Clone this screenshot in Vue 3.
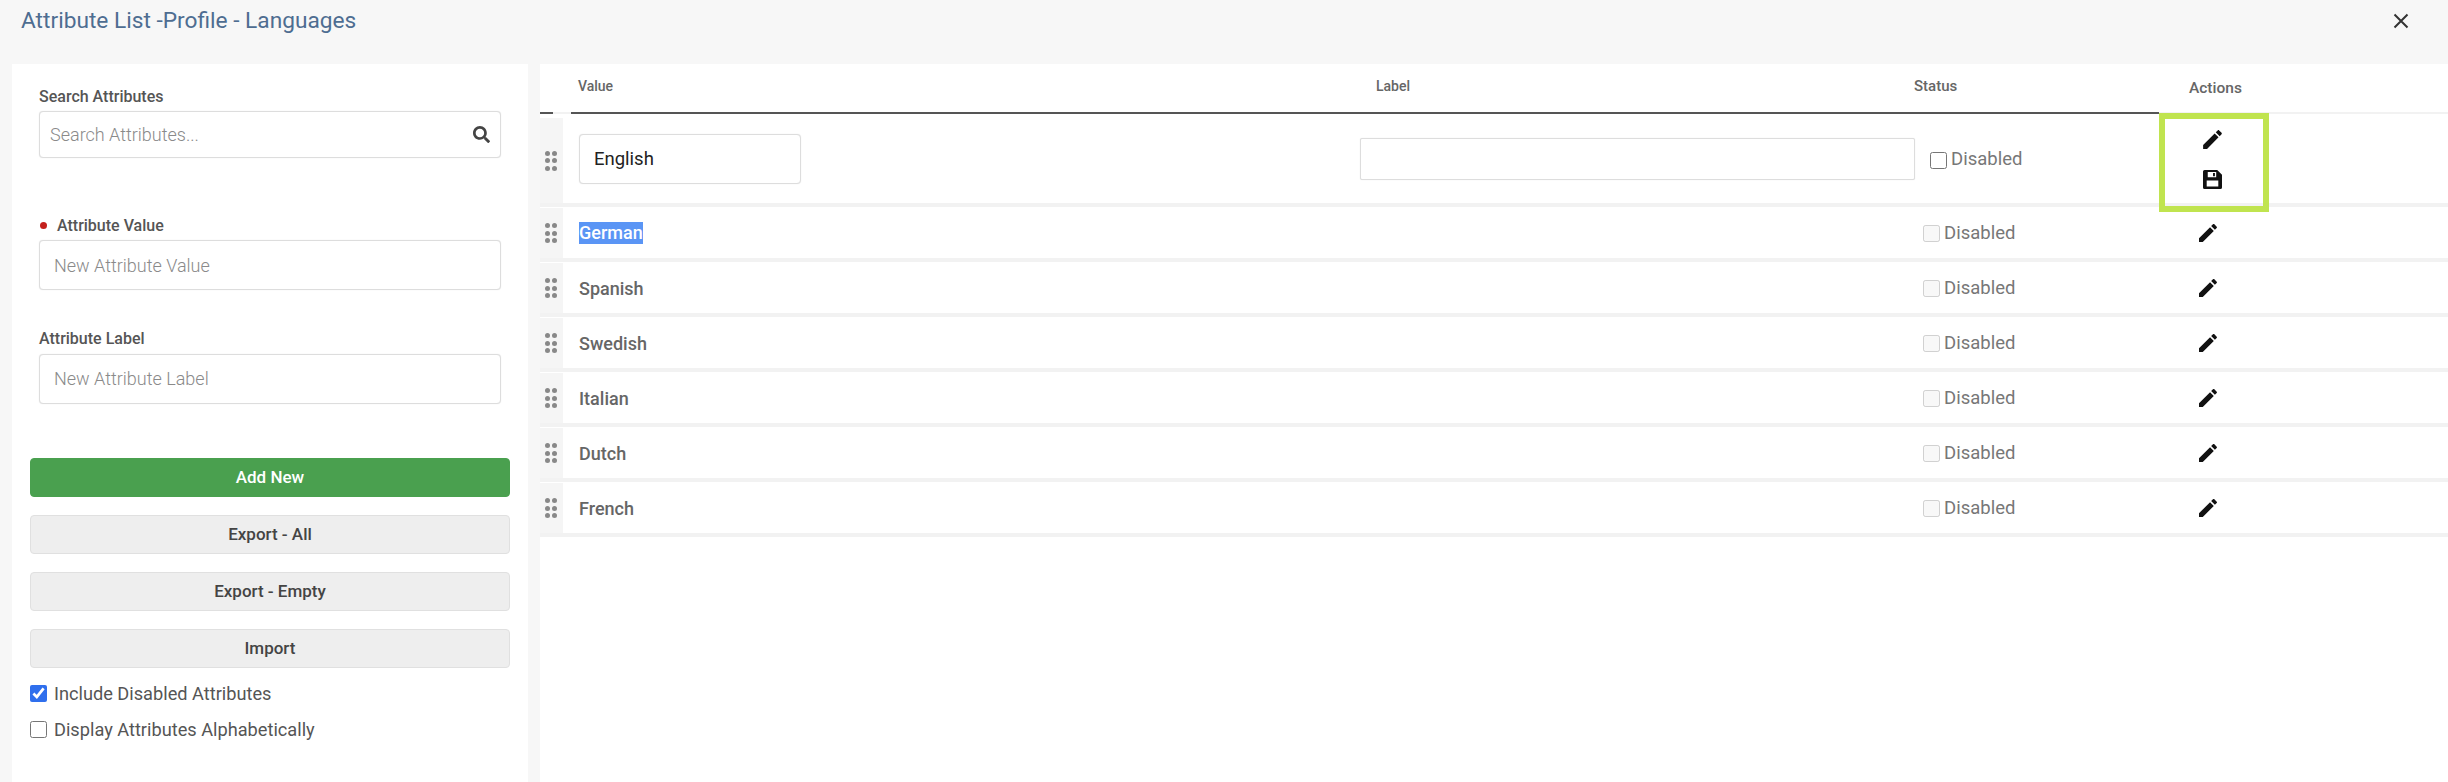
<script setup>
const rows = ['Spanish', 'Swedish', 'Italian', 'Dutch', 'French']
const pencil = 'M3 17.25V21h3.75L17.81 9.94l-3.75-3.75L3 17.25zM20.71 7.04c.39-.39.39-1.02 0-1.41l-2.34-2.34c-.39-.39-1.02-.39-1.41 0l-1.83 1.83 3.75 3.75 1.83-1.83z'
</script>

<template>
  <div class="page">
    <header class="topbar">
      <h1 class="title">Attribute List -Profile - Languages</h1>
      <svg class="close" viewBox="0 0 16 16" width="16" height="16"><path d="M1.5 1.5l13 13M14.5 1.5l-13 13" stroke="#333" stroke-width="2" fill="none" /></svg>
    </header>
    <div class="body">
      <aside class="side">
        <div class="field first">
          <label class="lbl">Search Attributes</label>
          <div class="box search">
            <span class="ph">Search Attributes...</span>
            <svg viewBox="0 0 512 512" width="17" height="17"><path fill="#444" d="M505 442.7L405.3 343c-4.500-4.500-10.600-7-17-7H372c27.600-35.300 44-79.700 44-128C416 93.100 322.900 0 208 0S0 93.100 0 208s93.100 208 208 208c48.300 0 92.700-16.400 128-44v16.300c0 6.400 2.500 12.500 7 17l99.700 99.700c9.400 9.400 24.600 9.400 33.900 0l28.300-28.300c9.400-9.400 9.400-24.600.1-34zM208 336c-70.700 0-128-57.200-128-128 0-70.700 57.200-128 128-128 70.700 0 128 57.200 128 128 0 70.700-57.200 128-128 128z" /></svg>
          </div>
        </div>
        <div class="field second">
          <label class="lbl"><span class="dot"></span>Attribute Value</label>
          <div class="box tall"><span class="ph">New Attribute Value</span></div>
        </div>
        <div class="field third">
          <label class="lbl">Attribute Label</label>
          <div class="box tall"><span class="ph">New Attribute Label</span></div>
        </div>
        <div class="buttons">
          <button class="btn green">Add New</button>
          <button class="btn">Export - All</button>
          <button class="btn">Export - Empty</button>
          <button class="btn">Import</button>
        </div>
        <label class="chk one"><input type="checkbox" checked />Include Disabled Attributes</label>
        <label class="chk two"><input type="checkbox" />Display Attributes Alphabetically</label>
      </aside>
      <main class="main">
        <div class="thead">
          <div class="hgap"></div>
          <div class="cv">Value</div>
          <div class="cl">Label</div>
          <div class="cs">Status</div>
          <div class="ca">Actions</div>
        </div>
        <div class="row edit">
          <div class="grip"><i v-for="n in 6" :key="n"></i></div>
          <div class="cv"><div class="box val">English</div></div>
          <div class="cl"><div class="box lab"></div></div>
          <div class="cs"><label class="dis dark"><input type="checkbox" />Disabled</label></div>
          <div class="ca">
            <div class="hl">
              <svg viewBox="0 0 24 24" width="25" height="25"><path :d="pencil" fill="#111" /></svg>
              <svg class="save" viewBox="0 0 18 18" width="19" height="19">
                <path fill="#111" d="M1.500 0h12L18 4.500V16.500A1.500 1.500 0 0 1 16.500 18h-15A1.500 1.500 0 0 1 0 16.500v-15A1.500 1.500 0 0 1 1.500 0z" />
                <path fill="#fff" d="M4.500 2h8v4.800h-8zM3.500 10h11v5.700h-11z" />
                <path fill="#111" d="M9.500 2.800h1.800v3.200H9.500z" />
              </svg>
            </div>
          </div>
        </div>
        <div class="row">
          <div class="grip"><i v-for="n in 6" :key="n"></i></div>
          <div class="cv txt"><span class="sel">German</span></div>
          <div class="cl"></div>
          <div class="cs"><label class="dis"><input type="checkbox" disabled />Disabled</label></div>
          <div class="ca act"><svg viewBox="0 0 24 24" width="24" height="24"><path :d="pencil" fill="#111" /></svg></div>
        </div>
        <div v-for="r in rows" :key="r" class="row">
          <div class="grip"><i v-for="n in 6" :key="n"></i></div>
          <div class="cv txt">{{ r }}</div>
          <div class="cl"></div>
          <div class="cs"><label class="dis"><input type="checkbox" disabled />Disabled</label></div>
          <div class="ca act"><svg viewBox="0 0 24 24" width="24" height="24"><path :d="pencil" fill="#111" /></svg></div>
        </div>
      </main>
    </div>
  </div>
</template>

<style>
html, body { margin: 0; background: #f7f7f7; }
</style>

<style scoped>
.page { width: 2448px; height: 782px; overflow: hidden; background: #f7f7f7; font-family: Roboto, "Liberation Sans", sans-serif; color: #555; }
.topbar { height: 64px; display: flex; justify-content: space-between; padding: 0 39px 0 21px; box-sizing: border-box; }
.title { margin: 8px 0 0; font-size: 22.700px; line-height: 26px; font-weight: 400; color: #4e6d91; }
.close { margin-top: 13px; }
.body { display: flex; height: 718px; }
.side { width: 516px; margin-left: 12px; background: #fff; padding: 0 18px; box-sizing: border-box; flex: none; }
.main { width: 1908px; margin-left: 12px; background: #fff; flex: none; }

.field { padding: 0 9px; }
.first { padding-top: 23px; }
.second { padding-top: 58px; }
.third { padding-top: 39.500px; }
.lbl { display: flex; align-items: center; height: 18px; font-size: 16px; font-weight: 500; color: #555; margin-bottom: 6px; }
.dot { width: 7px; height: 7px; border-radius: 50%; background: #c4201d; margin-right: 10px; margin-left: 1px; }
.box { border: 1px solid #ddd; border-radius: 4px; background: #fff; box-sizing: border-box; box-shadow: 0 0 1px #ddd; display: flex; align-items: center; }
.search { height: 47px; padding: 0 10px; justify-content: space-between; }
.tall { height: 50px; padding: 0 14px; }
.ph { font-size: 18px; color: #8a8a8a; font-weight: 300; }

.buttons { display: flex; flex-direction: column; gap: 18px; margin-top: 54.500px; }
.btn { height: 39px; border: 1px solid #e0e0e0; border-radius: 4px; background: #eee; font: 500 17px Roboto, sans-serif; color: #444; padding: 0 0 2px; }
.green { background: #4aa04f; border-color: #4aa04f; color: #fff; }
.chk { display: flex; align-items: center; font-size: 18.200px; color: #555; height: 20px; }
.chk input { width: 17px; height: 17px; margin: 0 7px 0 0; accent-color: #2f6fed; }
.one { margin-top: 15.500px; }
.two { margin-top: 16px; }

.thead { display: flex; height: 50px; border-bottom: 2px solid #f2f2f2; font-size: 14px; font-weight: 500; color: #666; position: relative; box-sizing: border-box; }
.thead::after { content: ""; position: absolute; left: 31px; width: 1588px; top: 48px; height: 2px; background: #555; }
.thead::before { content: ""; position: absolute; left: 0; width: 13px; top: 48px; height: 2px; background: #555; }
.thead > div { padding-top: 14px; line-height: 16px; }
.thead .cs { font-size: 15px; }
.thead .ca { padding-top: 16px; font-size: 15.500px; }
.hgap { width: 23px; flex: none; }
.cv { width: 797px; flex: none; padding-left: 16px; box-sizing: border-box; }
.thead .cv { padding-left: 15px; }
.cl { width: 554px; flex: none; padding-left: 16px; box-sizing: border-box; }
.cs { width: 245px; flex: none; box-sizing: border-box; }
.ca { flex: 1; padding-left: 30px; box-sizing: border-box; position: relative; }

.row { display: flex; align-items: center; height: 50px; margin-bottom: 5px; background: #fff; box-shadow: 0 3px 0 -1px #f2f2f2, 0 4px 0 #f2f2f2; }
.row.edit { height: 85px; margin-top: 4px; }
.grip { width: 23px; height: 100%; background: #f5f5f5; flex: none; display: grid; grid-template-columns: 5px 5px; gap: 2.500px 2px; justify-content: center; align-content: center; padding-right: 2px; box-sizing: border-box; }
.grip i { width: 5px; height: 5px; border-radius: 50%; background: #888; }
.val { width: 222px; height: 50px; padding-left: 14px; font-size: 18.500px; color: #222; margin-bottom: 3px; }
.edit .cl { padding-left: 0; }
.lab { width: 555px; height: 42px; border-radius: 2px; margin-bottom: 3px; }
.txt { font-size: 18px; font-weight: 500; color: #666; }
.sel { background: #5a95f5; color: #fff; display: inline-block; line-height: 22px; }
.dis { display: flex; align-items: center; font-size: 18.500px; color: #777; padding-left: 9px; margin-top: -1px; }
.dis input { width: 17px; height: 17px; margin: 2px 4px 0 0; }
.dis.dark { padding-left: 16px; margin: 0 0 3px; }
.act { padding-left: 37px; display: flex; align-items: center; margin-top: -1px; }

.hl { position: absolute; left: 0; top: -48px; width: 110px; height: 99px; border: 6px solid #c0e44f; box-sizing: border-box; display: flex; flex-direction: column; align-items: center; gap: 18px; padding: 8px 3px 0 0; }
.hl svg { flex: none; }
</style>
